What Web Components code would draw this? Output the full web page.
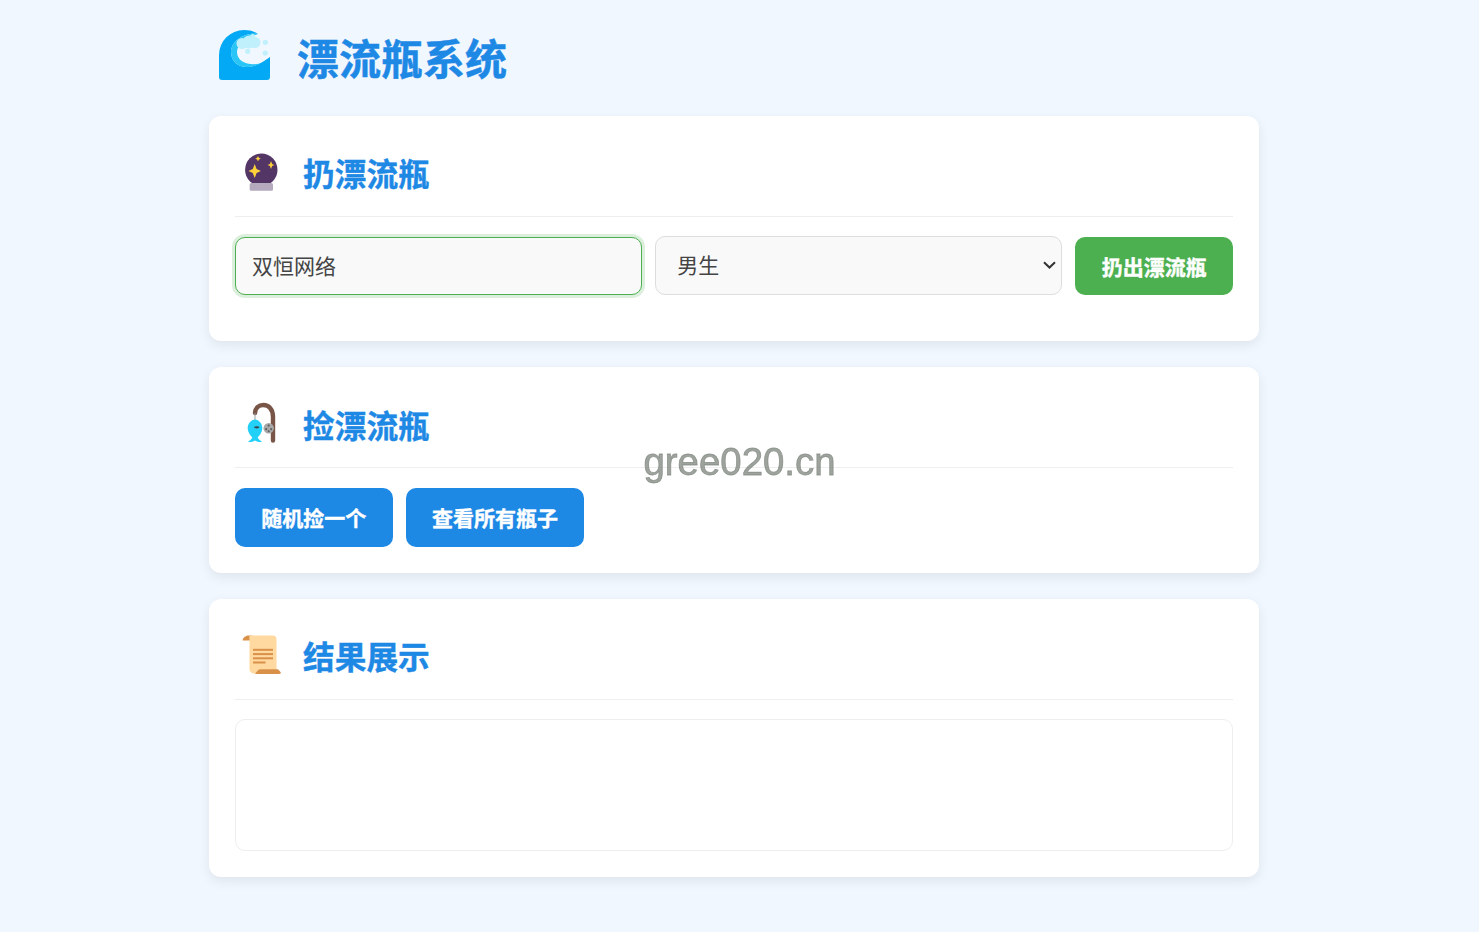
<!DOCTYPE html>
<html lang="zh">
<head>
<meta charset="utf-8">
<title>漂流瓶系统</title>
<style>
  * { box-sizing: border-box; }
  html, body { margin: 0; height: 100%; }
  body {
    background: #f0f7ff;
    font-family: "Noto Sans CJK SC", "Liberation Sans", sans-serif;
    color: #333;
    padding-right: 11px;
    overflow: hidden;
  }
  .page { width: 1050px; margin: 0 auto; padding-top: 20px; }
  .row { display: flex; gap: 13px; }
</style>
</head>
<body>
<div class="page">
  <site-header heading="漂流瓶系统"></site-header>

  <panel-card heading="扔漂流瓶">
    <svg slot="icon" width="48" height="48" viewBox="0 0 48 48">
      <circle cx="23.3" cy="21.8" r="16.2" fill="#533566"/>
      <rect x="11.7" y="35" width="23.3" height="7.7" rx="1.5" fill="#b5a9bd"/>
      <path d="M16.7 16 L18.6 21 L22.9 23 L18.6 25 L16.7 30 L14.8 25 L10.5 23 L14.8 21Z" fill="#ffd23c"/>
      <path d="M33 13 L34.1 15.9 L36.4 17 L34.1 18.1 L33 21 L31.9 18.1 L29.6 17 L31.9 15.9Z" fill="#ffd23c"/>
      <path d="M20 8 L20.9 9.8 L22.8 10.7 L20.9 11.6 L20 13.4 L19.1 11.6 L17.2 10.7 L19.1 9.8Z" fill="#ffd23c"/>
    </svg>
    <div class="row">
      <text-field value="双恒网络"></text-field>
      <choice-field></choice-field>
      <action-button color="#4caf50">扔出漂流瓶</action-button>
    </div>
    <div style="height:20px"></div>
  </panel-card>

  <panel-card heading="捡漂流瓶">
    <svg slot="icon" width="48" height="48" viewBox="0 0 48 48">
      <path d="M35 41.5 V18 C35 10 30.5 6 25.5 6 C20.5 6 17.3 9 17 14" fill="none" stroke="#795548" stroke-width="4.4" stroke-linecap="round"/>
      <path d="M17 14 V21" stroke="#9e9e9e" stroke-width="1"/>
      <path d="M17 20.5 C21 20.5 24.3 25 24.3 29 C24.3 33.5 21 37 19.7 38.5 C20.2 40 22 41.5 24 42.5 C23.5 43.2 20 43.3 17 41.5 C14 43.3 10.5 43.2 10 42.5 C12 41.5 13.8 40 14.3 38.5 C13 37 9.7 33.5 9.7 29 C9.7 25 13 20.5 17 20.5Z" fill="#22d0f8"/>
      <ellipse cx="18.8" cy="28.3" rx="2.6" ry="1.1" fill="#37474f"/>
      <circle cx="30.7" cy="29.3" r="5.2" fill="#a8a8a8"/>
      <circle cx="30.7" cy="26.6" r="1.1" fill="#616161"/>
      <circle cx="28.2" cy="30.2" r="1.1" fill="#616161"/>
      <circle cx="33.2" cy="30.2" r="1.1" fill="#616161"/>
      <circle cx="30.7" cy="32.2" r="1" fill="#616161"/>
    </svg>
    <div class="row">
      <action-button color="#1e88e5">随机捡一个</action-button>
      <action-button color="#1e88e5">查看所有瓶子</action-button>
    </div>
  </panel-card>

  <panel-card heading="结果展示">
    <svg slot="icon" width="48" height="48" viewBox="0 0 48 48">
      <path d="M4.5 9.5 C5 6 8 4.5 11 4.5 H14 V9.5Z" fill="#d9914a"/>
      <path d="M11.5 4.5 H34.5 A4 4 0 0 1 38.5 8.5 V42.5 H16 A4.5 4.5 0 0 1 11.5 38 V9.5 C11.5 7.5 11 5.5 11.5 4.5Z" fill="#ffd9a0"/>
      <path d="M17 43 C18.5 41 20 38.5 22 38.2 H39.5 C41 38.5 42.5 41 43 42.1 C43 42.5 42 43 41 43Z" fill="#d9914a"/>
      <g fill="#d9914a">
        <rect x="15" y="17.8" width="20" height="2"/>
        <rect x="15" y="22.1" width="20" height="2"/>
        <rect x="15" y="26.3" width="20" height="2"/>
        <rect x="15" y="30.5" width="12.5" height="2"/>
      </g>
    </svg>
    <result-box></result-box>
  </panel-card>
</div>
<water-mark>gree020.cn</water-mark>

<script>
class SiteHeader extends HTMLElement {
  connectedCallback() {
    const heading = this.getAttribute('heading') || '';
    this.attachShadow({ mode: 'open' }).innerHTML = `
      <style>
        :host { display: flex; align-items: center; height: 74px; margin-bottom: 22px; padding-left: 10px; }
        svg { margin: 0 27px 4px 0; flex: none; }
        h1 { margin: 0; font-size: 42px; line-height: 1.2; font-weight: 700; color: #1e88e5; -webkit-text-stroke: 0.5px #1e88e5; }
      </style>
      <svg width="51" height="50" viewBox="0 0 51 50">
        <path d="M3 50 A3 3 0 0 1 0 47 V25 A25 25 0 0 1 25 0 C30 0 35 1 39 4 C24 2 12 12 12 22 C12 32 20 38 30 37 C38 36 44 32 51 27 V47 A3 3 0 0 1 48 50Z" fill="#03a9f4"/>
        <path d="M39 4 C24 2 12 12 12 22 C12 32 20 38 30 37 C34 36.5 38 35.5 41 33.5 C30 36 18 32 18 22 C18 14 28 8 39 4Z" fill="#29c5f6"/>
        <g fill="#bff0fc">
          <circle cx="23" cy="13.5" r="5.5"/><circle cx="30" cy="12" r="6.5"/>
          <circle cx="36" cy="12.5" r="5.5"/><circle cx="46.3" cy="12.3" r="2.6"/>
          <circle cx="33.7" cy="6.7" r="2.6"/><circle cx="28.7" cy="21.3" r="2.6"/>
          <circle cx="46.3" cy="23" r="2.6"/>
        </g>
      </svg>
      <h1>${heading}</h1>`;
  }
}

class PanelCard extends HTMLElement {
  connectedCallback() {
    const heading = this.getAttribute('heading') || '';
    this.attachShadow({ mode: 'open' }).innerHTML = `
      <style>
        :host {
          display: block; background: #fff; border-radius: 12px; padding: 26px;
          margin-bottom: 26px; box-shadow: 0 4px 12px rgba(0, 0, 0, 0.08);
        }
        header {
          box-sizing: border-box; display: flex; align-items: center; height: 75px; padding-bottom: 13px;
          border-bottom: 1px solid #eee; margin-bottom: 20px;
        }
        ::slotted(svg) { flex: none; margin: 0 17px 1px 3px; }
        h2 { margin: 0; font-size: 31.7px; line-height: 1.2; font-weight: 700; color: #1e88e5; -webkit-text-stroke: 0.4px #1e88e5; }
      </style>
      <header><slot name="icon"></slot><h2>${heading}</h2></header>
      <slot></slot>`;
  }
}

class TextField extends HTMLElement {
  connectedCallback() {
    const root = this.attachShadow({ mode: 'open' });
    root.innerHTML = `
      <style>
        :host { display: block; flex: 1 1 0; min-width: 0; }
        input {
          display: block; box-sizing: border-box; width: 100%; height: 58.4px; padding: 0 16px 3px; font: 21px "Noto Sans CJK SC", "Liberation Sans", sans-serif;
          color: #444; background: #f9f9f9; border: 1px solid #4caf50; border-radius: 10px;
          outline: none; box-shadow: 0 0 0 3px rgba(76, 175, 80, 0.2);
        }
      </style>
      <input type="text">`;
    root.querySelector('input').value = this.getAttribute('value') || '';
  }
}

class ChoiceField extends HTMLElement {
  connectedCallback() {
    this.attachShadow({ mode: 'open' }).innerHTML = `
      <style>
        :host { display: block; position: relative; flex: 1 1 0; min-width: 0; }
        select {
          appearance: none; display: block; box-sizing: border-box; width: 100%; height: 59.4px; margin-top: -1px; padding: 0 36px 3px 21px;
          font: 21px "Noto Sans CJK SC", "Liberation Sans", sans-serif;
          color: #444; background: #f9f9f9; border: 1px solid #ddd; border-radius: 10px;
        }
        svg { position: absolute; right: 6px; top: 24px; pointer-events: none; }
      </style>
      <select><option>男生</option><option>女生</option></select>
      <svg width="13" height="8" viewBox="0 0 13 8"><path d="M1 1.2 L6.5 6.5 L12 1.2" fill="none" stroke="#333" stroke-width="2"/></svg>`;
  }
}

class ActionButton extends HTMLElement {
  connectedCallback() {
    const color = this.getAttribute('color') || '#1e88e5';
    this.attachShadow({ mode: 'open' }).innerHTML = `
      <style>
        :host { display: block; flex: none; }
        button {
          display: block; height: 58.4px; padding: 0 26.3px 1px; font: 700 21px "Noto Sans CJK SC", "Liberation Sans", sans-serif;
          color: #fff; background: ${color}; border: 0; border-radius: 10px; cursor: pointer; -webkit-text-stroke: 0.4px #fff;
        }
      </style>
      <button><slot></slot></button>`;
  }
}

class ResultBox extends HTMLElement {
  connectedCallback() {
    this.attachShadow({ mode: 'open' }).innerHTML = `
      <style>
        :host { display: block; height: 132px; margin-top: -0.4px; border: 1px solid #eee; border-radius: 10px; background: #fff; }
      </style>
      <slot></slot>`;
  }
}

class WaterMark extends HTMLElement {
  connectedCallback() {
    this.attachShadow({ mode: 'open' }).innerHTML = `
      <style>
        :host {
          position: fixed; left: 0; right: 0; top: 440px; text-align: center; pointer-events: none;
          font: 38.4px/44px "Liberation Sans", Arial, sans-serif; color: rgba(125, 132, 126, 0.75); -webkit-text-stroke: 0.8px rgba(125, 132, 126, 0.75);
        }
      </style>
      <slot></slot>`;
  }
}

customElements.define('site-header', SiteHeader);
customElements.define('panel-card', PanelCard);
customElements.define('text-field', TextField);
customElements.define('choice-field', ChoiceField);
customElements.define('action-button', ActionButton);
customElements.define('result-box', ResultBox);
customElements.define('water-mark', WaterMark);
</script>
</body>
</html>
